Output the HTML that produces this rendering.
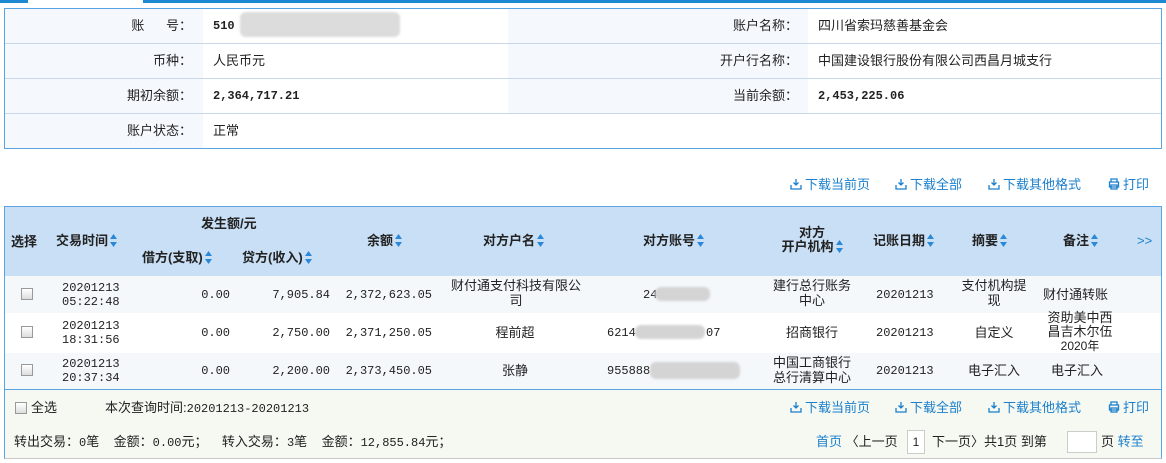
<!DOCTYPE html>
<html><head><meta charset="utf-8"><style>
*{margin:0;padding:0;box-sizing:border-box}
body{width:1166px;height:463px;background:#fff;font-family:"Liberation Sans","Noto Sans CJK SC",sans-serif;font-size:13px;line-height:16px;color:#222;position:relative;overflow:hidden}
.a{position:absolute;white-space:nowrap}
.m{font-family:"Liberation Mono","Noto Sans CJK SC",monospace;font-size:12px}
.b{font-weight:bold}
.blue{color:#1a7fcc}
.c{text-align:center}
.r{text-align:right}
.blur{position:absolute;background:#d4d4d4;border-radius:6px;filter:blur(1px)}
.sort{display:inline-block;width:7px;height:13px;vertical-align:-2px;margin-left:2px}
.cb{position:absolute;width:12px;height:12px;border:1px solid #999;background:linear-gradient(#fff,#ddd)}
.dl{display:inline-block;width:12px;height:12px;vertical-align:-1px;margin-right:3px}
</style></head><body>
<svg width="0" height="0" style="position:absolute"><defs>
<symbol id="s" viewBox="0 0 7 13"><path d="M3.5 0L7 5H0z" fill="#2a88d8"/><path d="M3.5 13L7 8H0z" fill="#2a88d8"/></symbol>
<symbol id="d" viewBox="0 0 12 12"><path d="M6 1v6M3.5 4.5L6 7l2.5-2.5M1 7v4h10V7" stroke="#1a7fcc" stroke-width="1.3" fill="none"/></symbol>
<symbol id="p" viewBox="0 0 12 12"><path d="M3 4V1h6v3M1.5 4h9v5h-9zM3 7h6v4H3z" stroke="#1a7fcc" stroke-width="1.3" fill="none"/></symbol>
</defs></svg>
<div class="a" style="left:0;top:0;width:28px;height:3px;background:#1e88d2"></div>
<div class="a" style="left:143px;top:0;width:1023px;height:3px;background:#1e88d2"></div>
<!-- info table -->
<div class="a" style="left:4px;top:8px;width:1158px;height:141px;border:1px solid #5aa2e0;background:#fff"></div>
<div class="a" style="left:5px;top:9px;width:198px;height:139px;background:#f5f9fd"></div>
<div class="a" style="left:508px;top:9px;width:300px;height:104px;background:#f5f9fd"></div>
<div class="a" style="left:5px;top:43px;width:1156px;height:1px;background:#c6d8ea"></div>
<div class="a" style="left:5px;top:78px;width:1156px;height:1px;background:#c6d8ea"></div>
<div class="a" style="left:5px;top:113px;width:1156px;height:1px;background:#c6d8ea"></div>
<div class="a r" style="left:100px;top:18px;width:92px">账&nbsp;&nbsp;&nbsp;&nbsp;&nbsp;&nbsp;号：</div>
<div class="a r" style="left:100px;top:53px;width:92px">币种：</div>
<div class="a r" style="left:100px;top:88px;width:92px">期初余额：</div>
<div class="a r" style="left:100px;top:123px;width:92px">账户状态：</div>
<div class="a m b" style="left:213px;top:18px">510</div>
<div class="blur" style="left:240px;top:12px;width:160px;height:25px;background:#dcdcdc"></div>
<div class="a" style="left:213px;top:53px">人民币元</div>
<div class="a m b" style="left:213px;top:88px">2,364,717.21</div>
<div class="a" style="left:213px;top:123px">正常</div>
<div class="a r" style="left:650px;top:18px;width:148px">账户名称：</div>
<div class="a r" style="left:650px;top:53px;width:148px">开户行名称：</div>
<div class="a r" style="left:650px;top:88px;width:148px">当前余额：</div>
<div class="a" style="left:818px;top:18px">四川省索玛慈善基金会</div>
<div class="a" style="left:818px;top:53px">中国建设银行股份有限公司西昌月城支行</div>
<div class="a m b" style="left:818px;top:88px">2,453,225.06</div>
<!-- toolbar -->
<div class="a blue" style="left:790px;top:177px"><svg class="dl"><use href="#d"/></svg>下载当前页</div>
<div class="a blue" style="left:895px;top:177px"><svg class="dl"><use href="#d"/></svg>下载全部</div>
<div class="a blue" style="left:988px;top:177px"><svg class="dl"><use href="#d"/></svg>下载其他格式</div>
<div class="a blue" style="left:1108px;top:177px"><svg class="dl"><use href="#p"/></svg>打印</div>
<!-- table -->
<div class="a" style="left:4px;top:206px;width:1158px;height:253px;border:1px solid #5aa2e0;border-bottom-color:#c8c8c8"></div>
<div class="a" style="left:5px;top:207px;width:1156px;height:69px;background:#c8dff5"></div>
<div class="a" style="left:5px;top:276px;width:1156px;height:37px;background:#f4f8fb"></div>
<div class="a" style="left:5px;top:353px;width:1156px;height:36px;background:#f4f8fb"></div>
<div class="a" style="left:5px;top:389px;width:1156px;height:1px;background:#5aa2e0"></div>
<div class="a" style="left:5px;top:390px;width:1156px;height:68px;background:#f6f8f2"></div>
<div class="a b" style="left:11px;top:234px">选择</div>
<div class="a b" style="left:56px;top:233px">交易时间<svg class="sort"><use href="#s"/></svg></div>
<div class="a b" style="left:201px;top:216px">发生额/元</div>
<div class="a b" style="left:142px;top:250px">借方(支取)<svg class="sort"><use href="#s"/></svg></div>
<div class="a b" style="left:242px;top:250px">贷方(收入)<svg class="sort"><use href="#s"/></svg></div>
<div class="a b" style="left:367px;top:233px">余额<svg class="sort"><use href="#s"/></svg></div>
<div class="a b" style="left:483px;top:233px">对方户名<svg class="sort"><use href="#s"/></svg></div>
<div class="a b" style="left:643px;top:233px">对方账号<svg class="sort"><use href="#s"/></svg></div>
<div class="a b c" style="left:772px;top:226px;width:80px;line-height:14px">对方<br>开户机构<svg class="sort"><use href="#s"/></svg></div>
<div class="a b" style="left:873px;top:233px">记账日期<svg class="sort"><use href="#s"/></svg></div>
<div class="a b" style="left:972px;top:233px">摘要<svg class="sort"><use href="#s"/></svg></div>
<div class="a b" style="left:1063px;top:233px">备注<svg class="sort"><use href="#s"/></svg></div>
<div class="a blue" style="left:1137px;top:233px">&gt;&gt;</div>
<!-- rows -->
<div class="cb" style="left:21px;top:288px"></div>
<div class="cb" style="left:21px;top:326px"></div>
<div class="cb" style="left:21px;top:364px"></div>
<div class="a m" style="left:62px;top:281px;line-height:14px">20201213<br>05:22:48</div>
<div class="a m" style="left:62px;top:319px;line-height:14px">20201213<br>18:31:56</div>
<div class="a m" style="left:62px;top:357px;line-height:14px">20201213<br>20:37:34</div>
<div class="a m r" style="left:150px;top:287px;width:80px">0.00</div>
<div class="a m r" style="left:150px;top:325px;width:80px">0.00</div>
<div class="a m r" style="left:150px;top:363px;width:80px">0.00</div>
<div class="a m r" style="left:230px;top:287px;width:100px">7,905.84</div>
<div class="a m r" style="left:230px;top:325px;width:100px">2,750.00</div>
<div class="a m r" style="left:230px;top:363px;width:100px">2,200.00</div>
<div class="a m r" style="left:330px;top:287px;width:102px">2,372,623.05</div>
<div class="a m r" style="left:330px;top:325px;width:102px">2,371,250.05</div>
<div class="a m r" style="left:330px;top:363px;width:102px">2,373,450.05</div>
<div class="a c" style="left:445px;top:278px;width:142px;line-height:15px;white-space:normal">财付通支付科技有限公司</div>
<div class="a c" style="left:440px;top:325px;width:150px">程前超</div>
<div class="a c" style="left:440px;top:363px;width:150px">张静</div>
<div class="a m" style="left:643px;top:287px">24</div>
<div class="blur" style="left:655px;top:287px;width:55px;height:14px"></div>
<div class="a m" style="left:607px;top:325px">6214</div>
<div class="blur" style="left:635px;top:325px;width:70px;height:14px"></div>
<div class="a m" style="left:706px;top:325px">07</div>
<div class="a m" style="left:607px;top:363px">955888</div>
<div class="blur" style="left:650px;top:362px;width:90px;height:17px"></div>
<div class="a c" style="left:762px;top:278px;width:100px;line-height:15px">建行总行账务<br>中心</div>
<div class="a c" style="left:762px;top:325px;width:100px">招商银行</div>
<div class="a c" style="left:762px;top:355px;width:100px;line-height:15px">中国工商银行<br>总行清算中心</div>
<div class="a m" style="left:876px;top:287px">20201213</div>
<div class="a m" style="left:876px;top:325px">20201213</div>
<div class="a m" style="left:876px;top:363px">20201213</div>
<div class="a c" style="left:944px;top:278px;width:100px;line-height:15px">支付机构提<br>现</div>
<div class="a c" style="left:944px;top:325px;width:100px">自定义</div>
<div class="a c" style="left:944px;top:363px;width:100px">电子汇入</div>
<div class="a" style="left:1043px;top:287px">财付通转账</div>
<div class="a c" style="left:1035px;top:311px;width:90px;line-height:14px">资助美中西<br>昌吉木尔伍<br><span style="font-size:12px">2020年</span></div>
<div class="a" style="left:1051px;top:363px">电子汇入</div>
<!-- footer -->
<div class="cb" style="left:15px;top:402px"></div>
<div class="a" style="left:31px;top:400px">全选</div>
<div class="a" style="left:105px;top:400px">本次查询时间:<span class="m">20201213-20201213</span></div>
<div class="a blue" style="left:790px;top:400px"><svg class="dl"><use href="#d"/></svg>下载当前页</div>
<div class="a blue" style="left:895px;top:400px"><svg class="dl"><use href="#d"/></svg>下载全部</div>
<div class="a blue" style="left:988px;top:400px"><svg class="dl"><use href="#d"/></svg>下载其他格式</div>
<div class="a blue" style="left:1108px;top:400px"><svg class="dl"><use href="#p"/></svg>打印</div>
<div class="a" style="left:14px;top:434px">转出交易：<span class="m">0</span>笔&nbsp;&nbsp;&nbsp;&nbsp;金额：<span class="m">0.00</span>元；&nbsp;&nbsp;&nbsp;&nbsp;转入交易：<span class="m">3</span>笔&nbsp;&nbsp;&nbsp;&nbsp;金额：<span class="m">12,855.84</span>元；</div>
<div class="a" style="left:816px;top:434px"><span class="blue">首页</span> 〈上一页</div>
<div class="a" style="left:907px;top:430px;width:18px;height:24px;border:1px solid #ccc;background:#fff;text-align:center;line-height:22px;font-size:12px">1</div>
<div class="a" style="left:932px;top:434px">下一页〉共1页 到第</div>
<div class="a" style="left:1067px;top:431px;width:30px;height:22px;border:1px solid #ccc;background:#fff"></div>
<div class="a" style="left:1101px;top:434px">页 <span class="blue">转至</span></div>
</body></html>
